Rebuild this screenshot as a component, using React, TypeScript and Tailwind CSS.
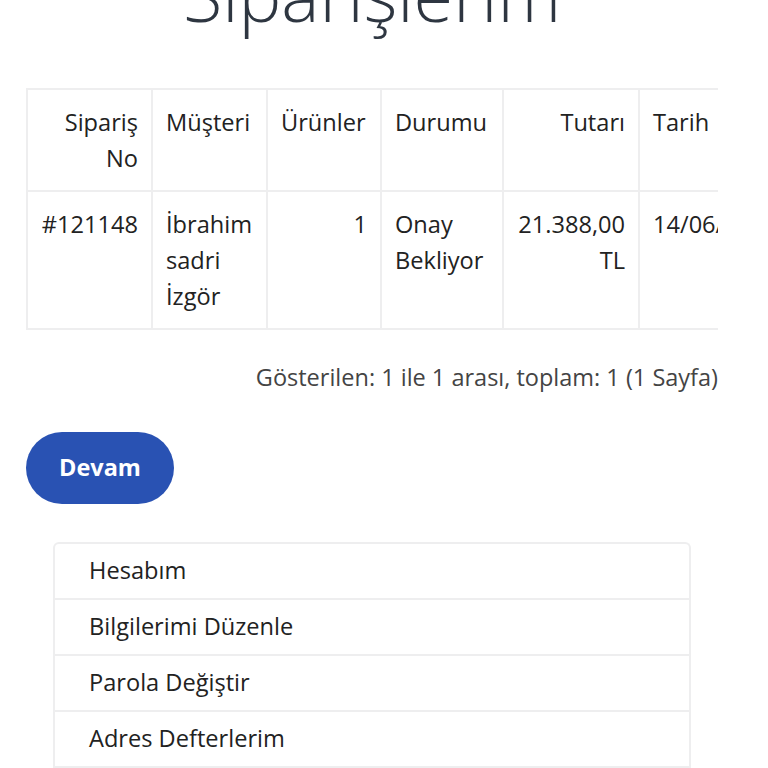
const cols = [
  { head: 'Sipariş No', w: 'w-[125px]', align: 'text-right' },
  { head: 'Müşteri', w: 'w-[115px]', align: 'text-left' },
  { head: 'Ürünler', w: 'w-[114px]', align: 'text-left' },
  { head: 'Durumu', w: 'w-[122px]', align: 'text-left' },
  { head: 'Tutarı', w: 'w-[136px]', align: 'text-right' },
  { head: 'Tarih', w: 'w-[150px]', align: 'text-left' },
]

const row = [
  { text: '#121148', align: 'text-right' },
  { text: 'İbrahim sadri İzgör', align: 'text-left' },
  { text: '1', align: 'text-right' },
  { text: 'Onay Bekliyor', align: 'text-left' },
  { text: '21.388,00 TL', align: 'text-right' },
  { text: '14/06/2024', align: 'text-left' },
]

const menu = ['Hesabım', 'Bilgilerimi Düzenle', 'Parola Değiştir', 'Adres Defterlerim', 'Siparişlerim']

export default function App() {
  return (
    <div className="h-[768px] overflow-hidden bg-white text-[#222] font-['Open_Sans',sans-serif]">
      <div className="pl-[26px] pr-[50px]">
        <h1 className="-mt-[50px] text-center text-[72px] font-light leading-[88px] text-[#2e3641]">Siparişlerim</h1>

        <div className="mt-[50px] overflow-hidden">
          <table className="w-[762px] border-collapse table-fixed text-[23.6px] leading-[36px]">
            <colgroup>
              {cols.map(c => (
                <col key={c.head} className={c.w} />
              ))}
            </colgroup>
            <thead>
              <tr>
                {cols.map(c => (
                  <th
                    key={c.head}
                    className={`${c.align} align-top font-normal border-2 border-[#eeeeef] px-[13px] pt-[14px] pb-[14px]`}
                  >
                    {c.head}
                  </th>
                ))}
              </tr>
            </thead>
            <tbody>
              <tr>
                {row.map((c, i) => (
                  <td
                    key={i}
                    className={`${c.align} align-top border-2 border-[#eeeeef] px-[13px] pt-[14px] pb-[14px] ${i === 5 ? 'whitespace-nowrap' : ''}`}
                  >
                    {c.text}
                  </td>
                ))}
              </tr>
            </tbody>
          </table>
        </div>

        <p className="mt-[31px] text-right text-[23.5px] leading-[32px] text-[#444]">
          Gösterilen: 1 ile 1 arası, toplam: 1 (1 Sayfa)
        </p>

        <button className="mt-[39px] h-[72px] w-[148px] rounded-full bg-[#2952b3] text-[23.5px] font-bold text-white">
          Devam
        </button>

        <ul className="mt-[38px] mx-[27px] rounded-t-[6px] border-2 border-b-0 border-[#eeeeef]">
          {menu.map(m => (
            <li key={m} className="h-[56px] border-b-2 border-[#eeeeef] pl-[34px] text-[23.6px] leading-[52px]">
              {m}
            </li>
          ))}
        </ul>
      </div>
    </div>
  )
}
